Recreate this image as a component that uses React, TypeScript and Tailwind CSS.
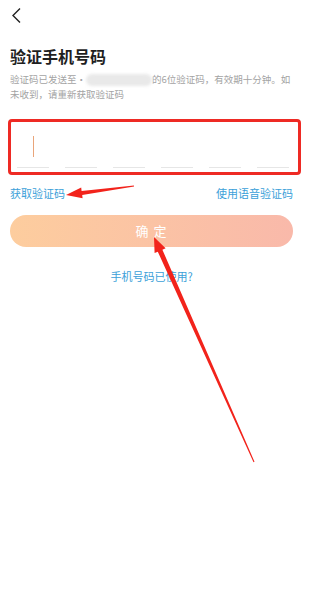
import React from 'react';

const font = { fontFamily: '"Noto Sans CJK SC", "Noto Sans", sans-serif' };

function CodeCells() {
  return (
    <div className="flex gap-[16px] pl-[6px]">
      {[0, 1, 2, 3, 4, 5].map((i) => (
        <div key={i} className="flex flex-col items-center justify-end h-[46px] w-[32px]">
          {i === 0 && <div className="w-px h-[21px] mb-[10px] bg-[#e9a57a]" />}
          <div className="w-full h-px bg-[#e6e6e6]" />
        </div>
      ))}
    </div>
  );
}

/* red annotation arrows drawn over the page */
function Annotations() {
  return (
    <svg className="absolute inset-0 pointer-events-none" width="325" height="600" viewBox="0 0 325 600">
      <polygon
        fill="#f2231b"
        points="66,195 81.2,187.4 81.6,190.9 133.9,185.5 134.1,186.5 82.2,194.9 82.6,198.3"
      />
      <polygon
        fill="#f2231b"
        points="154,237 165.6,248.3 162.4,249.7 254.5,461.8 253.5,462.2 157.8,251.7 154.6,253.1"
      />
    </svg>
  );
}

export default function App() {
  return (
    <div className="relative w-[325px] h-[600px] bg-white overflow-hidden" style={font}>
      <div className="pt-[8px] pl-[12px]">
        <svg width="9" height="15" viewBox="0 0 9 15">
          <polyline points="8,0.5 1,7.5 8,14.5" fill="none" stroke="#222" strokeWidth="1.4" />
        </svg>
      </div>

      <div className="pl-[10px] pr-[32px]">
        <h1 className="mt-[21px] text-[16px] leading-[24px] font-bold text-[#1f1f1f]">验证手机号码</h1>
        <p className="mt-[4px] text-[9.5px] leading-[14.5px] text-[#a3a3a3] whitespace-nowrap">
          验证码已发送至·
          <span className="inline-block align-middle w-[66px] h-[12px] rounded-full bg-[#e9e9e9] blur-[1.5px]" />
          的6位验证码，有效期十分钟。如
          <br />
          未收到，请重新获取验证码
        </p>

        <div className="mt-[18px] -ml-[2px] -mr-[8px] border-[3px] border-[#ee2a24] rounded-[4px] pb-[4px]">
          <CodeCells />
        </div>

        <div className="mt-[10px] flex justify-between text-[11px] leading-[16px] text-[#3b9fd9]">
          <span>获取验证码</span>
          <span>使用语音验证码</span>
        </div>

        <button className="mt-[14px] w-full h-[32px] rounded-full bg-gradient-to-r from-[#fdcd9e] to-[#f9b9aa] text-white text-[13px] tracking-[1px]">
          确 定
        </button>

        <div className="mt-[21px] text-center text-[11px] leading-[16px] text-[#3b9fd9]">手机号码已使用?</div>
      </div>

      <Annotations />
    </div>
  );
}
